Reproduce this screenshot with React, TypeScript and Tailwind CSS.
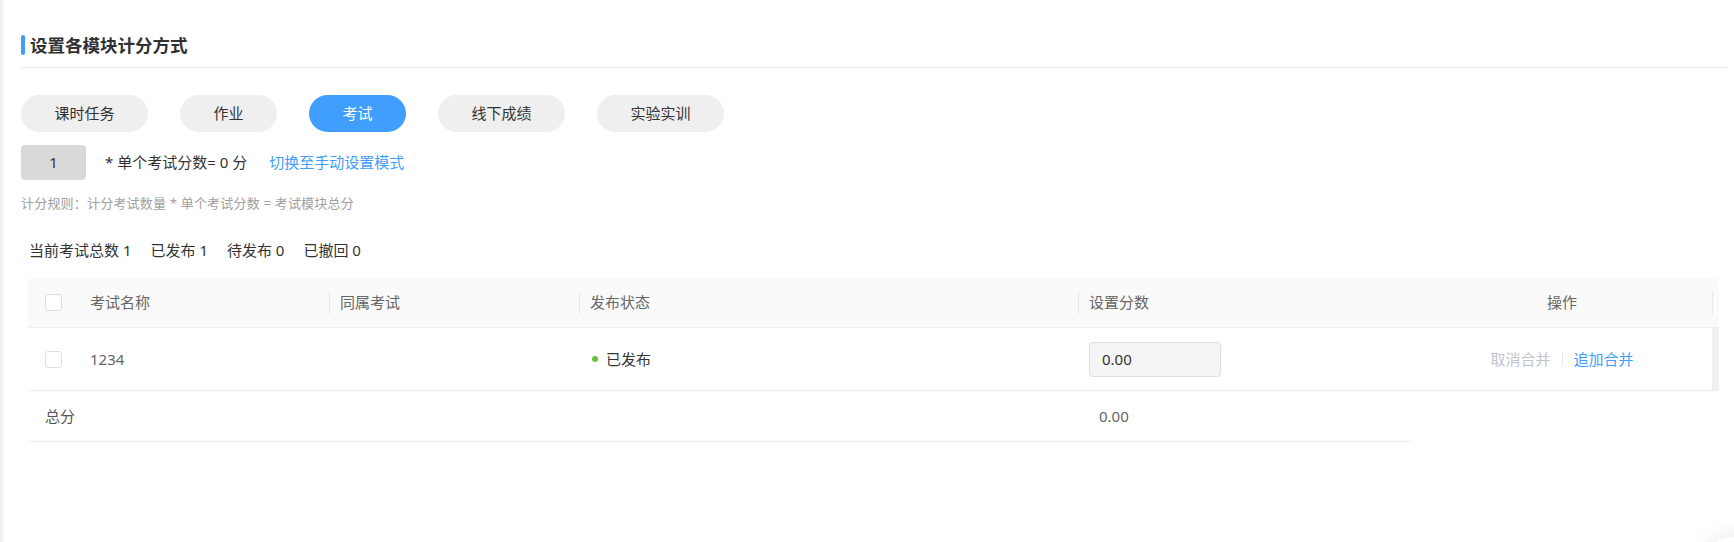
import React from 'react';

const tabs = ['课时任务', '作业', '考试', '线下成绩', '实验实训'];

const Checkbox = () => (
  <span className="block w-[17px] h-[17px] rounded-[3px] border border-[#dcdfe6] bg-white" />
);

const App = () => {
  return (
    <div
      className="relative flex h-[542px] w-[1734px] overflow-hidden bg-white text-[#333]"
      style={{ fontFamily: '"Noto Sans", "Noto Sans CJK SC", sans-serif' }}
    >
      {/* left edge strip */}
      <div className="w-[3px] shrink-0 bg-[#f2f2f2]" />

      <div className="ml-[18px] w-[1706px] pt-[35px]">
        {/* title */}
        <div className="flex h-[20px] items-center">
          <span className="h-[20px] w-[4px] rounded-[2px] bg-[#409eff]" />
          <span className="ml-[5px] text-[17.5px] font-bold leading-[20px] text-[#303133]">设置各模块计分方式</span>
        </div>
        <div className="mt-[12px] h-px bg-[#ebebeb]" />

        {/* tabs */}
        <div className="mt-[27px] flex gap-[32px]">
          {tabs.map((t) => (
            <button
              key={t}
              className={
                t === '考试'
                  ? 'h-[37px] rounded-full bg-[#409eff] px-[33.5px] text-[15px] leading-[37px] text-white'
                  : 'h-[37px] rounded-full bg-[#efefef] px-[33.5px] text-[15px] leading-[37px] text-[#333]'
              }
            >
              {t}
            </button>
          ))}
        </div>

        {/* count row */}
        <div className="mt-[13px] flex items-center">
          <div className="flex h-[35px] w-[65px] items-center justify-center rounded-[4px] bg-[#d9d9d9] text-[15px] text-[#333]">
            1
          </div>
          <span className="ml-[19px] text-[15px] text-[#333]">* 单个考试分数= 0 分</span>
          <span className="ml-[22px] cursor-pointer text-[15px] text-[#409eff]">切换至手动设置模式</span>
        </div>

        <div className="mt-[14px] text-[13px] leading-[18px] tracking-[0.2px] text-[#a0a0a0]">
          计分规则：计分考试数量 * 单个考试分数 = 考试模块总分
        </div>

        <div className="ml-[8px] mt-[27px] flex gap-[19px] text-[15px] leading-[22px] text-[#333]">
          <span>当前考试总数 1</span>
          <span>已发布 1</span>
          <span>待发布 0</span>
          <span>已撤回 0</span>
        </div>

        {/* table */}
        <div className="mx-[7px] mt-[17px] w-[1691px] text-[15px]">
          {/* header */}
          <div className="flex h-[50px] items-center rounded-tr-[4px] border-b border-[#ebeef5] bg-[#fafafa] text-[#666]">
            <div className="w-[52px] pl-[17px]">
              <Checkbox />
            </div>
            <div className="w-[249px] pl-[10px]">考试名称</div>
            <div className="flex w-[250px] items-center">
              <span className="h-[23px] w-px bg-[#e8e8e8]" />
              <span className="pl-[10px]">同属考试</span>
            </div>
            <div className="flex w-[499px] items-center">
              <span className="h-[23px] w-px bg-[#e8e8e8]" />
              <span className="pl-[10px]">发布状态</span>
            </div>
            <div className="flex w-[334px] items-center">
              <span className="h-[23px] w-px bg-[#e8e8e8]" />
              <span className="pl-[10px]">设置分数</span>
            </div>
            <div className="w-[300px] text-center">操作</div>
            <span className="h-[23px] w-px bg-[#e8e8e8]" />
          </div>

          {/* row */}
          <div className="flex h-[63px] items-center border-b border-[#ebeef5]">
            <div className="w-[52px] pl-[17px]">
              <Checkbox />
            </div>
            <div className="w-[249px] pl-[10px] text-[#666]">1234</div>
            <div className="w-[250px]" />
            <div className="flex w-[499px] items-center pl-[13px]">
              <span className="h-[6px] w-[6px] rounded-full bg-[#67c23a]" />
              <span className="ml-[8px] text-[#333]">已发布</span>
            </div>
            <div className="w-[334px] pl-[11px]">
              <div className="flex h-[35px] w-[132px] items-center rounded-[4px] border border-[#dcdfe6] bg-[#f5f5f5] pl-[12px] text-[#333]">
                0.00
              </div>
            </div>
            <div className="flex w-[300px] items-center justify-center">
              <span className="text-[#c0c4cc]">取消合并</span>
              <span className="mx-[11px] h-[13px] w-px bg-[#e4e7ed]" />
              <span className="text-[#409eff]">追加合并</span>
            </div>
            <div className="h-full w-[7px] bg-[#f0f0f0]" />
          </div>

          {/* total row */}
          <div className="flex h-[51px] w-[1384px] items-center border-b border-[#ebeef5] text-[#555]">
            <div className="w-[1071px] pl-[17px]">总分</div>
            <div className="text-[#666]">0.00</div>
          </div>
        </div>
      </div>

      {/* floating button peeking from the corner */}
      <div className="absolute left-[1703px] top-[537px] h-[60px] w-[60px] rounded-full bg-white shadow-[0_0_24px_rgba(0,0,0,0.10)]" />
    </div>
  );
};

export default App;
